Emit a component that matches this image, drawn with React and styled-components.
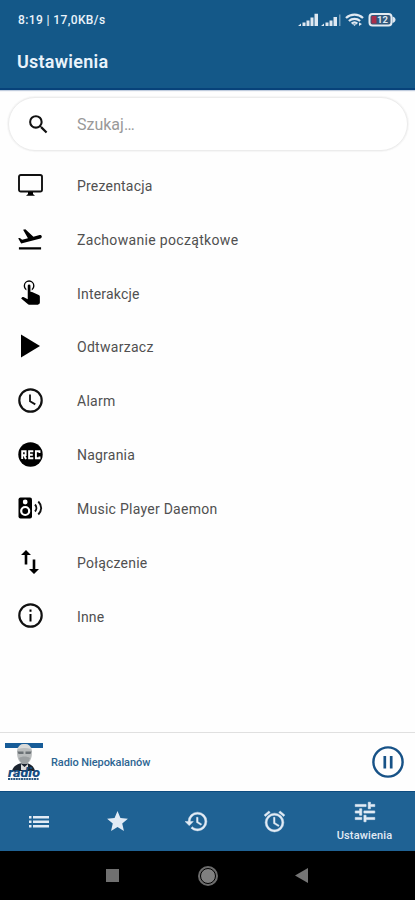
import React from "react";
import styled, { createGlobalStyle } from "styled-components";

const GlobalStyle = createGlobalStyle`
  body {
    margin: 0;
    background: #fefefe;
    font-family: Roboto, "Noto Sans", sans-serif;
  }
  svg {
    display: block;
    flex: none;
  }
`;

const settings = [
  { label: "Prezentacja", spacing: 0.2, icon: <DesktopIcon /> },
  { label: "Zachowanie początkowe", spacing: 0.33, icon: <TakeoffIcon /> },
  { label: "Interakcje", spacing: 0.2, icon: <TapIcon /> },
  { label: "Odtwarzacz", spacing: 0.29, icon: <PlayIcon /> },
  { label: "Alarm", spacing: 0.25, icon: <ClockIcon /> },
  { label: "Nagrania", spacing: 0.22, icon: <RecIcon /> },
  { label: "Music Player Daemon", spacing: 0.26, icon: <SpeakerIcon /> },
  { label: "Połączenie", spacing: 0.22, icon: <SwapIcon /> },
  { label: "Inne", spacing: 0.15, icon: <InfoIcon /> },
];

function App() {
  return (
    <Screen>
      <GlobalStyle />
      <Header>
        <StatusBar>
          <StatusText>8:19 | 17,0KB/s</StatusText>
          <StatusIcons />
        </StatusBar>
        <Title>Ustawienia</Title>
      </Header>

      <SearchBox>
        <SearchIcon />
        <Placeholder>Szukaj…</Placeholder>
      </SearchBox>

      <List>
        {settings.map((item) => (
          <Row key={item.label}>
            <IconSlot>{item.icon}</IconSlot>
            <Label $spacing={item.spacing}>{item.label}</Label>
          </Row>
        ))}
      </List>

      <Player>
        <StationLogo />
        <Station>Radio Niepokalanów</Station>
        <PauseIcon />
      </Player>

      <NavBar>
        <Tab>
          <ListIcon />
        </Tab>
        <Tab>
          <StarIcon />
        </Tab>
        <Tab>
          <HistoryIcon />
        </Tab>
        <Tab>
          <AlarmIcon />
        </Tab>
        <Tab $active>
          <TuneIcon />
          <TabLabel>Ustawienia</TabLabel>
        </Tab>
      </NavBar>

      <SystemBar>
        <SquareKey />
        <HomeKey />
        <BackKey viewBox="0 0 13 15">
          <path d="M13 0v15L0 7.5z" />
        </BackKey>
      </SystemBar>
    </Screen>
  );
}

function StatusIcons() {
  return (
    <svg width="98" height="16" viewBox="0 0 98 16" fill="#dfe8f1">
      <path d="M0 14l3-2.500V14zM4.500 10.500h3V14h-3zM8.500 8.500h3V14h-3zM12.500 5.500h3V14h-3zM16.500 1.800h3.500V14h-3.500z" />
      <path d="M23 14l3-2.500V14zM27.500 10.500h3V14h-3zM31.500 8.500h3V14h-3zM35.500 5H39v9h-3.500z" />
      <path d="M41 2.500h1.500V14H41z" opacity=".45" />
      <g fill="none" stroke="#dfe8f1" strokeWidth="2.300">
        <path d="M48 6c4.800-4.600 12.200-4.600 17 0M50.900 9c3.200-2.900 8-2.900 11.200 0" />
        <path d="M53.700 11.600c1.600-1.400 4-1.400 5.600 0" />
      </g>
      <path d="M54.800 12.200h3.400L56.500 14zM61 10.500l3 1.500-3 2z" />
      <rect x="71.500" y="2" width="22" height="11.500" rx="3" fill="#31577b" stroke="#e4ebf2" strokeWidth="2" />
      <path d="M94.500 4.500c4 1 4 5.500 0 6.500z" />
      <path d="M73.500 4h5v7.500h-5z" fill="#a92f4b" />
      <text x="79" y="11.200" fontSize="9.500" fontWeight="700">
        12
      </text>
    </svg>
  );
}

function SearchIcon() {
  return (
    <svg width="25" height="25" viewBox="0 0 24 24" fill="#111">
      <path d="M15.500 14h-.79l-.28-.27A6.471 6.471 0 0 0 16 9.500 6.500 6.500 0 1 0 9.500 16c1.610 0 3.090-.59 4.230-1.570l.27.28v.79l5 4.990L20.490 19l-4.990-5zm-6 0C7.010 14 5 11.990 5 9.500S7.010 5 9.500 5 14 7.010 14 9.500 11.990 14 9.500 14z" />
    </svg>
  );
}

function DesktopIcon() {
  return (
    <svg width="25" height="22" viewBox="0 0 25 22">
      <rect x="1" y="1" width="23" height="16.500" rx="1.800" fill="none" stroke="#111" strokeWidth="1.900" />
      <path d="M10 18h5v2l2 1.800H8L10 20z" />
    </svg>
  );
}

function TakeoffIcon() {
  return (
    <svg width="28" height="28" viewBox="0 0 24 24">
      <path d="M2.500 19h19v2h-19zm19.570-9.360c-.21-.8-1.040-1.280-1.840-1.060L14.920 10l-6.900-6.430-1.930.51 4.140 7.170-4.970 1.330-1.970-1.540-1.450.39 2.590 4.490L21 11.490c.81-.23 1.280-1.050 1.070-1.850z" />
    </svg>
  );
}

function TapIcon() {
  return (
    <svg width="19" height="25" viewBox="5 4.800 14.100 18.400">
      <path d="M10 9a1 1 0 0 1 2 0v4.470l1.210.13 4.940 2.190c.53.24.85.77.85 1.350v4.360c-.03.82-.68 1.470-1.500 1.500H11c-.38 0-.74-.15-1-.43l-4.900-4.200.74-.77c.19-.21.46-.32.74-.32h.22L10 19V9" />
      <path d="M11 5a4 4 0 0 1 4 4c0 1.500-.8 2.770-2 3.460v-1.220c.61-.55 1-1.350 1-2.240a3 3 0 0 0-6 0c0 .89.39 1.690 1 2.240v1.220C7.800 11.770 7 10.500 7 9a4 4 0 0 1 4-4z" />
    </svg>
  );
}

function PlayIcon() {
  return (
    <svg width="19" height="24" viewBox="0 0 19 24">
      <path d="M0 .5v23L19 12z" />
    </svg>
  );
}

function ClockIcon() {
  return (
    <svg width="25" height="25" viewBox="0 0 25 25" fill="none" stroke="#111" strokeWidth="2.200">
      <circle cx="12.500" cy="12.500" r="11.200" />
      <path d="M12 6.500v6.800l5.300 3.100" strokeWidth="1.800" />
    </svg>
  );
}

function RecIcon() {
  return (
    <svg width="25" height="25" viewBox="0 0 25 25">
      <circle cx="12.500" cy="12.500" r="12.200" />
      <g fill="none" stroke="#fff" strokeWidth="1.900">
        <path d="M4.200 17V9.200h3.400v3.900H4.200M6 13l2 4M15.300 9.200h-4.200v7h4.200M11 12.700h3.800M21.500 11V9.200h-3.600v7h3.600v-1.800" />
      </g>
    </svg>
  );
}

function SpeakerIcon() {
  return (
    <svg width="25" height="22" viewBox="0 0 25 22">
      <rect x=".5" y=".5" width="13.500" height="21" rx="2" />
      <circle cx="7.200" cy="5" r="2.400" fill="#fff" />
      <circle cx="7.200" cy="14" r="4" fill="none" stroke="#fff" strokeWidth="2.200" />
      <path d="M17 7.500c1.800 2 1.800 5 0 7M20.300 4.500c3.800 3.900 3.800 9.100 0 13" fill="none" stroke="#111" strokeWidth="1.900" />
    </svg>
  );
}

function SwapIcon() {
  return (
    <svg width="18" height="24" viewBox="0 0 18 24">
      <path d="M5 0l5 5H6.300v9.500H3.700V5H0zM13 24l-5-5h3.700V9.500h2.600V19H18z" />
    </svg>
  );
}

function InfoIcon() {
  return (
    <svg width="25" height="25" viewBox="0 0 25 25">
      <circle cx="12.500" cy="12.500" r="11.200" fill="none" stroke="#111" strokeWidth="2.200" />
      <path d="M11.500 6.500h2v2.200h-2zM11.500 11h2v7.500h-2z" />
    </svg>
  );
}

// portrait of the station's patron over the word mark
function StationLogo() {
  return (
    <svg width="38" height="38" viewBox="0 0 38 38">
      <path d="M0 0h38v5H0z" fill="#175c98" />
      <path d="M7 28c1-5 6-8 12-8s10 3 11 8z" fill="#1c2430" />
      <path d="M12 9c0-5 3-8 7.500-8S27 4 27 9c0 6-2 12-7.500 12S12 15 12 9z" fill="#b9bcbd" />
      <path d="M13 6c1-4 3-5 6.500-5S25 2 26 6c-4-1.500-9-1.500-13 0z" fill="#d9dad9" />
      <path d="M12.500 8.500h6v2.500h-5zM20.500 8.500h6l-1 2.500h-5z" fill="#6b7175" />
      <path d="M14 15c3-2 8-2 11 0-1 4-3 6-5.500 6S15 19 14 15z" fill="#9b9fa1" />
      <path d="M16 21l3.500 3 3.500-3v6h-7z" fill="#ddd" />
      <text x="3" y="33.500" fontSize="13" fontWeight="900" fontStyle="italic" fill="#174d82" textLength="32" lengthAdjust="spacingAndGlyphs">
        radio
      </text>
      <path d="M3 36h31" stroke="#275681" strokeWidth="1.800" strokeDasharray="2 .6" />
    </svg>
  );
}

function PauseIcon() {
  return (
    <svg width="32" height="32" viewBox="0 0 32 32" fill="none" stroke="#175287">
      <circle cx="16" cy="16" r="14.600" strokeWidth="2.400" />
      <path d="M12.800 10v12.500M19.200 10v12.500" strokeWidth="2.700" />
    </svg>
  );
}

function ListIcon() {
  return (
    <svg width="20" height="14" viewBox="0 0 20 14">
      <path d="M0 1h2.500v2.500H0zM4 1h16v2.500H4zM0 5.500h2.500V8H0zM4 5.500h16V8H4zM0 10h2.500v2.500H0zM4 10h16v2.500H4z" />
    </svg>
  );
}

function StarIcon() {
  return (
    <svg width="25" height="25" viewBox="0 0 24 24">
      <path d="M12 17.270L18.180 21l-1.640-7.030L22 9.240l-7.190-.61L12 2 9.190 8.630 2 9.240l5.460 4.730L5.820 21z" />
    </svg>
  );
}

function HistoryIcon() {
  return (
    <svg width="25" height="25" viewBox="0 0 24 24" stroke="currentColor" strokeWidth=".4">
      <path d="M13 3a9 9 0 0 0-9 9H1l3.890 3.890.07.14L9 12H6c0-3.870 3.130-7 7-7s7 3.130 7 7-3.130 7-7 7c-1.930 0-3.680-.79-4.940-2.060l-1.420 1.420A8.954 8.954 0 0 0 13 21a9 9 0 0 0 0-18zm-1 5v5l4.280 2.540.72-1.210-3.500-2.080V8H12z" />
    </svg>
  );
}

function AlarmIcon() {
  return (
    <svg width="25" height="25" viewBox="0 0 24 24" stroke="currentColor" strokeWidth=".4">
      <path d="M22 5.720l-4.600-3.860-1.290 1.530 4.600 3.860L22 5.720zM7.880 3.390L6.600 1.860 2 5.710l1.290 1.530 4.590-3.850zM12.500 8H11v6l4.750 2.850.75-1.230-4-2.370V8zM12 4a9 9 0 1 0 0 18 9 9 0 0 0 0-18zm0 16c-3.870 0-7-3.130-7-7s3.130-7 7-7 7 3.130 7 7-3.130 7-7 7z" />
    </svg>
  );
}

function TuneIcon() {
  return (
    <svg width="26" height="26" viewBox="0 0 24 24" stroke="currentColor" strokeWidth=".6">
      <path d="M3 17v2h6v-2H3zM3 5v2h10V5H3zm10 16v-2h8v-2h-8v-2h-2v6h2zM7 9v2H3v2h4v2h2V9H7zm14 4v-2H11v2h10zm-6-4h2V7h4V5h-4V3h-2v6z" />
    </svg>
  );
}

const Screen = styled.div`
  width: 415px;
  height: 900px;
  display: flex;
  flex-direction: column;
  overflow: hidden;
`;

const Header = styled.header`
  height: 90px;
  box-sizing: border-box;
  flex: none;
  background: #145888;
  border-bottom: 2px solid #07427a;
  box-shadow: 0 1px 1px rgb(50, 90, 150, 0.3);
  color: #eaf3fb;
`;

const StatusBar = styled.div`
  height: 40px;
  padding: 0 19px 0 18px;
  display: flex;
  align-items: center;
  justify-content: space-between;
`;

const StatusText = styled.span`
  font-size: 12px;
  font-weight: 500;
  letter-spacing: 0.38px;
`;

const Title = styled.h1`
  margin: 0;
  padding-left: 17px;
  font-size: 18px;
  font-weight: 600;
  line-height: 44px;
  letter-spacing: 0.25px;
`;

const SearchBox = styled.div`
  height: 54px;
  box-sizing: border-box;
  flex: none;
  margin: 7px 7px 0 8px;
  padding: 1px 0 0 17px;
  display: flex;
  align-items: center;
  gap: 26px;
  border: 1px solid #ececec;
  border-radius: 27px;
  background: #fff;
  box-shadow: 0 0 1px 1px #f5f5f5;
`;

const Placeholder = styled.span`
  font-size: 16px;
  color: #999;
`;

const List = styled.ul`
  list-style: none;
  margin: 8px 0 0;
  padding: 0;
  flex: 1;
`;

const Row = styled.li`
  height: 53.85px;
  padding-left: 17px;
  display: flex;
  align-items: center;
  gap: 34px;
`;

const IconSlot = styled.span`
  width: 26px;
  padding-bottom: 2px;
  display: flex;
  justify-content: center;
`;

const Label = styled.span`
  font-size: 14px;
  color: #505050;
  letter-spacing: ${(props) => props.$spacing}px;
`;

const Player = styled.div`
  height: 59px;
  box-sizing: border-box;
  flex: none;
  padding: 0 11px 0 5px;
  display: flex;
  align-items: center;
  gap: 8px;
  border-top: 1px solid #e0e0e0;
`;

const Station = styled.span`
  flex: 1;
  font-size: 11px;
  font-weight: 500;
  letter-spacing: -0.08px;
  color: #2d6592;
`;

const NavBar = styled.nav`
  height: 60px;
  box-sizing: border-box;
  flex: none;
  display: flex;
  border-top: 1px solid #0d4c80;
  background: #1f6294;
  color: #e2ebf5;
`;

const Tab = styled.a`
  flex: ${(props) => (props.$active ? "0 0 101px" : "1")};
  display: flex;
  flex-direction: column;
  align-items: center;
  justify-content: center;

  svg {
    fill: currentColor;
  }
`;

const TabLabel = styled.span`
  margin-top: 2px;
  font-size: 11px;
  font-weight: 500;
  line-height: 17px;
  letter-spacing: 0.15px;
`;

const SystemBar = styled.div`
  height: 49px;
  flex: none;
  padding: 0 107px 0 106px;
  display: flex;
  align-items: center;
  justify-content: space-between;
  background: #000;
`;

const SquareKey = styled.span`
  width: 13px;
  height: 13px;
  background: #707070;
`;

const HomeKey = styled.span`
  width: 14px;
  height: 14px;
  margin-left: 2px;
  border: 1px solid #000;
  border-radius: 50%;
  background: #808080;
  box-shadow: 0 0 0 2px #6c6c6c;
`;

const BackKey = styled.svg`
  width: 13px;
  height: 15px;
  fill: #757575;
`;

export default App;
